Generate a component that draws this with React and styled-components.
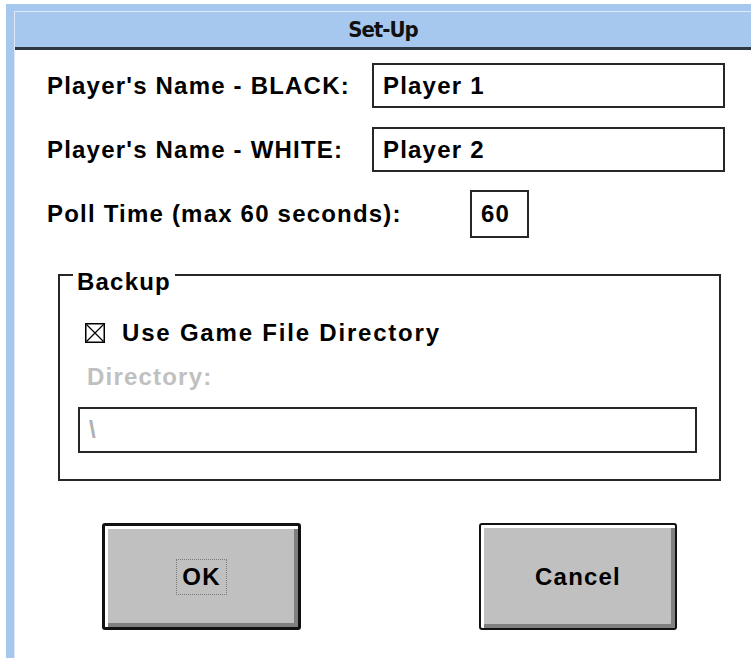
import styled, { createGlobalStyle } from "styled-components";

const GlobalStyle = createGlobalStyle`
  html, body {
    margin: 0;
    padding: 0;
    background: #fff;
  }
  body {
    font-family: "Liberation Sans", Arial, sans-serif;
    font-weight: bold;
    font-size: 24px;
    letter-spacing: 1.2px;
    color: #000;
  }
`;

const Screen = styled.div`
  width: 751px;
  height: 658px;
  padding: 4px 0 0 6px;
  box-sizing: border-box;
  overflow: hidden;
  background: #fff;
`;

const Frame = styled.div`
  height: 100%;
  display: flex;
  padding: 7px 0 0 8px;
  box-sizing: border-box;
  background: #a6c8ef;
`;

const Client = styled.div`
  flex: 1;
  display: flex;
  flex-direction: column;
  background: #fff;
  border-top: 1px solid #dde9f8;
  border-left: 1px solid #dde9f8;
`;

const TitleBar = styled.div`
  height: 35px;
  display: flex;
  align-items: center;
  justify-content: center;
  background: #a6c8ef;
  border-bottom: 3px solid #2e3744;
  font-family: "DejaVu Sans Condensed", "DejaVu Sans", sans-serif;
  font-size: 22px;
  letter-spacing: -1px;
  color: #111;
`;

const Body = styled.div`
  flex: 1;
  display: flex;
  flex-direction: column;
  padding: 13px 26px 0 32px;
`;

const FieldRow = styled.div`
  display: flex;
  align-items: center;
  margin-top: ${({ $gap }) => $gap}px;
`;

const Label = styled.div`
  width: ${({ $width }) => $width}px;
  flex-shrink: 0;
  white-space: nowrap;
  color: ${({ $disabled }) => ($disabled ? "#c0c0c0" : "#000")};
`;

const TextBox = styled.div`
  box-sizing: border-box;
  height: ${({ $height }) => $height}px;
  width: ${({ $width }) => ($width ? `${$width}px` : "auto")};
  flex: ${({ $width }) => ($width ? "none" : "1")};
  display: flex;
  align-items: center;
  padding: 0 9px;
  border: 2px solid #262626;
  background: #fff;
  color: ${({ $disabled }) => ($disabled ? "#b0b0b0" : "#000")};
  white-space: nowrap;
`;

const GroupBox = styled.fieldset`
  margin: 18px 0 0 11px;
  width: 663px;
  box-sizing: border-box;
  min-width: 0;
  padding: 0 22px 26px 18px;
  border: 2px solid #262626;
`;

/* the caption hangs below the frame line, as on the old dialogs */
const Legend = styled.legend`
  margin-left: -5px;
  padding: 14px 4px 0;
  line-height: 24px;
`;

const CheckRow = styled.div`
  display: flex;
  align-items: center;
  gap: 17px;
  height: 24px;
  margin: 27px 0 0 7px;
`;

const CheckText = styled.span`
  letter-spacing: 1.8px;
`;

const CaptionRow = styled.div`
  height: 24px;
  line-height: 24px;
  margin: 20px 0 18px 9px;
`;

const CheckMark = () => (
  <svg width="20" height="20" viewBox="0 0 20 20">
    <rect x="0.75" y="0.75" width="18.5" height="18.5" fill="#fff" stroke="#000" strokeWidth="1.5" />
    <path d="M1.5 1.5 L18.5 18.5 M18.5 1.5 L1.5 18.5" stroke="#000" strokeWidth="1.2" />
  </svg>
);

const ButtonRow = styled.div`
  display: flex;
  gap: 178px;
  margin: 42px 0 0 55px;
`;

const Button = styled.div`
  box-sizing: border-box;
  width: ${({ $width }) => $width}px;
  height: 107px;
  display: flex;
  align-items: center;
  justify-content: center;
  background: #c0c0c0;
  border: ${({ $default }) => ($default ? "3px" : "2px")} solid #111;
  border-radius: 3px;
  box-shadow: inset 3px 3px 0 #fff, inset -4px -4px 0 #808080;
  color: #000;
`;

const FocusRing = styled.span`
  padding: 4px 5px;
  outline: 1px dotted #7a7a7a;
  line-height: 26px;
`;

export default function App() {
  return (
    <>
      <GlobalStyle />
      <Screen>
        <Frame>
          <Client>
            <TitleBar>Set-Up</TitleBar>
            <Body>
              <FieldRow $gap={0}>
                <Label $width={325}>Player's Name - BLACK:</Label>
                <TextBox $height={45}>Player 1</TextBox>
              </FieldRow>
              <FieldRow $gap={19}>
                <Label $width={325}>Player's Name - WHITE:</Label>
                <TextBox $height={45}>Player 2</TextBox>
              </FieldRow>
              <FieldRow $gap={18}>
                <Label $width={423}>Poll Time (max 60 seconds):</Label>
                <TextBox $height={48} $width={59}>60</TextBox>
              </FieldRow>

              <GroupBox>
                <Legend>Backup</Legend>
                <CheckRow>
                  <CheckMark />
                  <CheckText>Use Game File Directory</CheckText>
                </CheckRow>
                <CaptionRow>
                  <Label $disabled>Directory:</Label>
                </CaptionRow>
                <TextBox $height={46} $disabled>
                  \
                </TextBox>
              </GroupBox>

              <ButtonRow>
                <Button $width={199} $default>
                  <FocusRing>OK</FocusRing>
                </Button>
                <Button $width={198}>Cancel</Button>
              </ButtonRow>
            </Body>
          </Client>
        </Frame>
      </Screen>
    </>
  );
}
